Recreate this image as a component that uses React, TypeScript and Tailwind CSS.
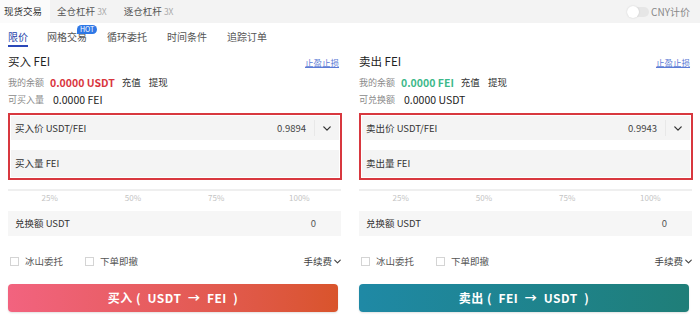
import React from "react";

type Side = {
  title: string;
  balance: string;
  balanceColor: string;
  availLabel: string;
  avail: string;
  priceLabel: string;
  price: string;
  amountLabel: string;
  button: string;
  buttonClass: string;
};

const sides: Side[] = [
  {
    title: "买入 FEI",
    balance: "0.0000 USDT",
    balanceColor: "text-[#d9363e]",
    availLabel: "可买入量",
    avail: "0.0000 FEI",
    priceLabel: "买入价 USDT/FEI",
    price: "0.9894",
    amountLabel: "买入量 FEI",
    button: "买入 (  USDT  →  FEI  )",
    buttonClass: "bg-gradient-to-r from-[#f2637f] to-[#d9542b]",
  },
  {
    title: "卖出 FEI",
    balance: "0.0000 FEI",
    balanceColor: "text-[#3db98a]",
    availLabel: "可兑换额",
    avail: "0.0000 USDT",
    priceLabel: "卖出价 USDT/FEI",
    price: "0.9943",
    amountLabel: "卖出量 FEI",
    button: "卖出 (  FEI  →  USDT  )",
    buttonClass: "bg-gradient-to-r from-[#1f89a5] to-[#1f7e78]",
  },
];

const Chevron = ({ className = "" }: { className?: string }) => (
  <svg viewBox="0 0 10 6" className={className} fill="none" stroke="currentColor" strokeWidth="1.6" strokeLinecap="round" strokeLinejoin="round">
    <path d="M1 1l4 4 4-4" />
  </svg>
);

const Panel = ({ s }: { s: Side }) => (
  <div className="flex flex-col">
    {/* header */}
    <div className="flex items-center justify-between h-[18px] mt-[3px]">
      <span className="text-[11.5px] text-[#222]">{s.title}</span>
      <span className="text-[8.5px] text-[#5b7bd5] underline mr-[2px]">止盈止损</span>
    </div>
    <div className="flex items-center h-[17px] mt-[3px] text-[9px]">
      <span className="text-[#8a8a8a]">我的余额</span>
      <span className={`ml-[6px] font-semibold text-[10.5px] ${s.balanceColor}`}>{s.balance}</span>
      <span className="ml-[7px] text-[#333] text-[9.5px]">充值</span>
      <span className="ml-[8px] text-[#333] text-[9.5px]">提现</span>
    </div>
    <div className="flex items-center h-[17px] text-[9px]">
      <span className="text-[#8a8a8a]">{s.availLabel}</span>
      <span className="ml-[9px] text-[#222] text-[10.5px]">{s.avail}</span>
    </div>

    {/* highlighted inputs */}
    <div className="mt-[5px] border-2 border-[#d8383f] p-[1px] flex flex-col gap-[10px] mr-[-1px]">
      <div className="h-[24px] bg-[#f4f4f4] flex items-center pl-[4px] text-[9.5px] text-[#333]">
        <span className="flex-1">{s.priceLabel}</span>
        <span className="text-[#444] pr-[8px]">{s.price}</span>
        <span className="w-px h-[16px] bg-[#e8e8e8]" />
        <span className="w-[24px] flex justify-center text-[#333]">
          <Chevron className="w-[8px] h-[5px]" />
        </span>
      </div>
      <div className="h-[27px] bg-[#f4f4f4] flex items-center pl-[4px] text-[9.5px] text-[#333]">
        {s.amountLabel}
      </div>
    </div>

    {/* slider */}
    <div className="mt-[9px] h-[2px] bg-[#efefef]" />
    <div className="grid grid-cols-4 text-center text-[8px] text-[#c4c4c4] h-[12px] leading-[12px] mt-[1px]">
      <span>25%</span>
      <span>50%</span>
      <span>75%</span>
      <span>100%</span>
    </div>

    <div className="mt-[7px] h-[25px] bg-[#f6f6f6] flex items-center justify-between px-[7px] text-[9.5px] text-[#333]">
      <span>兑换额 USDT</span>
      <span className="pr-[18px] text-[#555]">0</span>
    </div>

    <div className="mt-[17px] h-[16px] flex items-center text-[9.5px] text-[#555]">
      <span className="ml-[2px] w-[9px] h-[9px] border border-[#d4d4d4] bg-white" />
      <span className="ml-[6px]">冰山委托</span>
      <span className="ml-[22px] w-[9px] h-[9px] border border-[#d4d4d4] bg-white" />
      <span className="ml-[6px]">下单即撤</span>
      <span className="ml-auto flex items-center gap-[2px] text-[#444]">
        手续费
        <Chevron className="w-[7px] h-[5px]" />
      </span>
    </div>

    <button className={`mt-[15px] mr-[3px] h-[28px] rounded-[4px] text-white text-[12px] font-bold tracking-[0.5px] whitespace-pre shadow-[0_1px_2px_rgba(0,0,0,0.12)] ${s.buttonClass}`}>
      {s.button}
    </button>
  </div>
);

export default function App() {
  return (
    <div className="w-[700px] h-[330px] bg-white overflow-hidden [font-family:'Noto_Sans_CJK_SC','Noto_Sans',sans-serif]">
      {/* top tab bar */}
      <div className="h-[23px] bg-[#f3f3f3] flex items-center text-[9.5px]">
        <div className="h-full w-[50px] bg-[#fbfbfb] pl-[4px] flex items-center text-[#333]">现货交易</div>
        <div className="ml-[7px] text-[#555]">
          全仓杠杆 <span className="text-[8.5px] text-[#aaa]">3X</span>
        </div>
        <div className="ml-[17px] text-[#555]">
          逐仓杠杆 <span className="text-[8.5px] text-[#aaa]">3X</span>
        </div>
        <div className="ml-auto mr-[10px] flex items-center gap-[2px]">
          <span className="relative w-[22px] h-[10px] rounded-full bg-[#e6e6e6]">
            <span className="absolute left-0 top-[-1px] w-[12px] h-[12px] rounded-full bg-white shadow-[0_0_2px_rgba(0,0,0,0.15)]" />
          </span>
          <span className="text-[10px] text-[#888]">CNY计价</span>
        </div>
      </div>

      {/* order types */}
      <div className="h-[27px] flex items-center px-[8px] text-[10px] text-[#555] gap-[19px]">
        <div className="relative h-full flex items-center text-[#1d3fa8]">
          限价
          <span className="absolute left-0 bottom-[3px] w-[20px] h-[2px] bg-[#2b48b8]" />
        </div>
        <div className="relative">
          网格交易
          <span className="absolute left-[30px] top-[-4px] px-[3px] h-[9px] leading-[9px] rounded-[5px] rounded-bl-none bg-[#2f78e6] text-white text-[7px]">
            HOT
          </span>
        </div>
        <div className="ml-[1px]">循环委托</div>
        <div className="ml-[1px]">时间条件</div>
        <div className="ml-[1px]">追踪订单</div>
      </div>

      <div className="px-[8px] grid grid-cols-2 gap-x-[18px]">
        {sides.map((s) => (
          <Panel key={s.title} s={s} />
        ))}
      </div>
    </div>
  );
}
